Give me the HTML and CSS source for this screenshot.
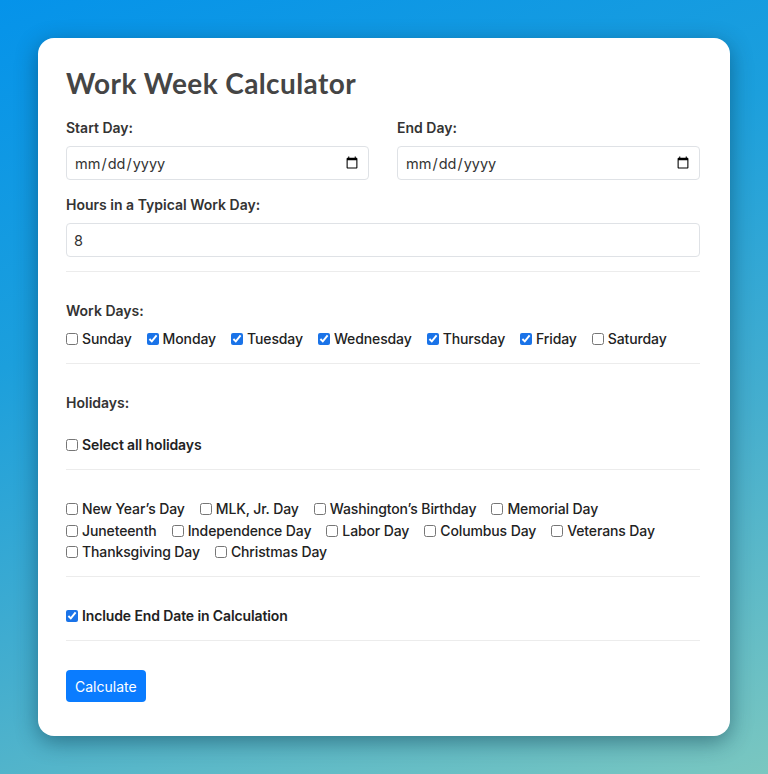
FILE: index.html
```html
<!DOCTYPE html>
<html lang="en">
<head>
<meta charset="utf-8">
<title>Work Week Calculator</title>
<link rel="stylesheet" href="styles.css">
</head>
<body>
<main class="card">
  <h1 class="title">Work Week Calculator</h1>
  <div class="row-2">
    <div class="field">
      <label class="label">Start Day:</label>
      <input class="input" type="date">
    </div>
    <div class="field">
      <label class="label">End Day:</label>
      <input class="input" type="date">
    </div>
  </div>
  <div class="field field-hours">
    <label class="label">Hours in a Typical Work Day:</label>
    <input class="input" type="text" value="8">
  </div>

  <section class="section">
    <div class="label">Work Days:</div>
    <div class="checks checks-days">
      <label class="check"><input type="checkbox">Sunday</label>
      <label class="check"><input type="checkbox" checked>Monday</label>
      <label class="check"><input type="checkbox" checked>Tuesday</label>
      <label class="check"><input type="checkbox" checked>Wednesday</label>
      <label class="check"><input type="checkbox" checked>Thursday</label>
      <label class="check"><input type="checkbox" checked>Friday</label>
      <label class="check"><input type="checkbox">Saturday</label>
    </div>
  </section>

  <section class="section">
    <div class="label">Holidays:</div>
    <div class="checks checks-all">
      <label class="check check-lg"><input type="checkbox">Select all holidays</label>
    </div>
  </section>

  <section class="section">
    <div class="hol-list">
      <div class="checks">
        <label class="check"><input type="checkbox">New Year’s Day</label>
        <label class="check"><input type="checkbox">MLK, Jr. Day</label>
        <label class="check"><input type="checkbox">Washington’s Birthday</label>
        <label class="check"><input type="checkbox">Memorial Day</label>
      </div>
      <div class="checks">
        <label class="check"><input type="checkbox">Juneteenth</label>
        <label class="check"><input type="checkbox">Independence Day</label>
        <label class="check"><input type="checkbox">Labor Day</label>
        <label class="check"><input type="checkbox">Columbus Day</label>
        <label class="check"><input type="checkbox">Veterans Day</label>
      </div>
      <div class="checks">
        <label class="check"><input type="checkbox">Thanksgiving Day</label>
        <label class="check"><input type="checkbox">Christmas Day</label>
      </div>
    </div>
  </section>

  <section class="section">
    <label class="check check-lg"><input type="checkbox" checked>Include End Date in Calculation</label>
  </section>

  <div class="actions">
    <button class="btn" type="button">Calculate</button>
  </div>
</main>
</body>
</html>
```

FILE: styles.css
```css
* { box-sizing: border-box; }
html, body { margin: 0; height: 100%; }
body {
  background: linear-gradient(160deg, #0593ea 0%, #1c9fdc 35%, #45aece 65%, #7ac7c0 100%);
  padding: 38px 38px;
  font-family: Inter, "Noto Sans", sans-serif;
  color: #222;
}
.card {
  background: #fff;
  border-radius: 16px;
  box-shadow: 0 6px 22px rgba(0, 40, 60, 0.45);
  padding: 28px 30px 34px 28px;
}
.title {
  margin: 0 0 18px;
  font-family: Lato, "Noto Sans", sans-serif;
  font-weight: 700;
  font-size: 28px;
  line-height: 34px;
  color: #454545;
  letter-spacing: 0.4px;
}
.row-2 {
  display: grid;
  grid-template-columns: 1fr 1fr;
  gap: 28px;
}
.field { display: flex; flex-direction: column; }
.field-hours { margin-top: 15px; }
.label {
  font-size: 14px;
  line-height: 20px;
  font-weight: 600;
  color: #333;
  margin-bottom: 8px;
}
.input {
  height: 34px;
  border: 1px solid #dfe2e6;
  border-radius: 4px;
  padding: 0 7px;
  font-family: Inter, "Noto Sans", sans-serif;
  font-size: 14.5px;
  color: #333;
  background: #fff;
}
.section {
  border-top: 1px solid #ececec;
  margin-top: 14px;
  padding-top: 29px;
}
.checks {
  display: flex;
  flex-wrap: wrap;
  column-gap: 14px;
}
.checks-days { column-gap: 15px; }
.checks-all { margin-top: 22px; }
.hol-list {
  display: flex;
  flex-direction: column;
  row-gap: 1.5px;
}
.hol-list .checks { column-gap: 15px; }
.check {
  display: inline-flex;
  align-items: center;
  font-size: 14px;
  line-height: 20px;
  font-weight: 500;
  letter-spacing: -0.12px;
  color: #222;
}
.check-lg { font-weight: 600; }
.check input {
  width: 12px;
  height: 12px;
  margin: 0 4px 0 0;
  accent-color: #1a73e8;
}
.actions {
  border-top: 1px solid #ececec;
  margin-top: 14px;
  padding-top: 29px;
}
.btn {
  background: #0a7cff;
  color: #fff;
  border: none;
  border-radius: 4px;
  height: 32px;
  padding: 0 9px;
  font-family: Inter, "Noto Sans", sans-serif;
  font-size: 14px;
}
```
